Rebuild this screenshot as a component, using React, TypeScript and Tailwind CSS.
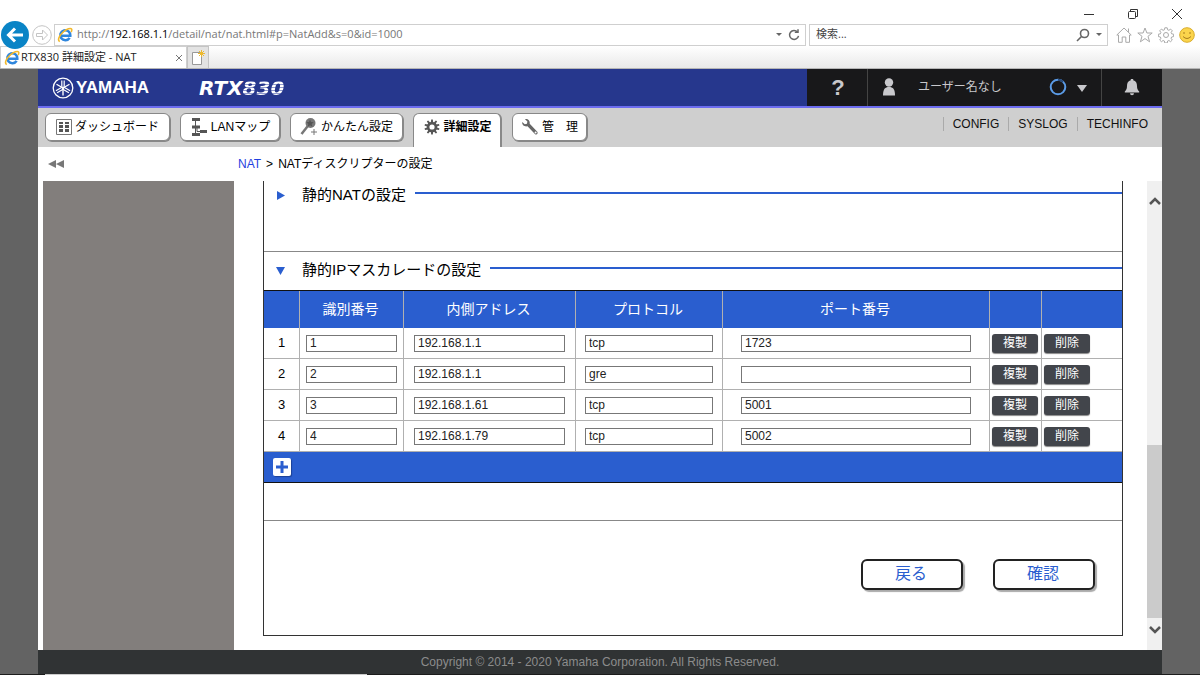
import { useState } from 'react';
import type { ReactNode } from 'react';

type Rule = { id: string; address: string; protocol: string; port: string };

const initialRules: Rule[] = [
  { id: '1', address: '192.168.1.1', protocol: 'tcp', port: '1723' },
  { id: '2', address: '192.168.1.1', protocol: 'gre', port: '' },
  { id: '3', address: '192.168.1.61', protocol: 'tcp', port: '5001' },
  { id: '4', address: '192.168.1.79', protocol: 'tcp', port: '5002' },
];

const uiFont = "font-['Open_Sans','Noto_Sans_CJK_JP',sans-serif]";

function IeLogo() {
  return (
    <svg viewBox="0 0 16 16" className="h-4 w-4 shrink-0" fill="none" aria-hidden="true">
      <path d="M12.6 10.8A5 5 0 1 1 13.300 8.700H4.500" stroke="#2f86dd" strokeWidth="2.600" />
      <path
        d="M2.800 14.600C.2 13.600 2 8.800 6.200 5c3.600-3.200 7.600-4.400 8.400-2.900.4.8.1 1.900-.5 3"
        stroke="#f2b92c"
        strokeWidth="1.6"
      />
    </svg>
  );
}

function TitleBar() {
  return (
    <div className="flex h-[23px] items-center justify-end gap-8 pr-[17px] text-[#333]">
      <button type="button" aria-label="最小化" className="mt-1">
        <svg viewBox="0 0 12 12" className="h-3 w-3" stroke="currentColor">
          <path d="M1 6.5h10" />
        </svg>
      </button>
      <button type="button" aria-label="元に戻す" className="mt-1">
        <svg viewBox="0 0 12 12" className="h-3 w-3" fill="none" stroke="currentColor">
          <rect x="1.5" y="3.5" width="7" height="7" rx="1" />
          <path d="M3.500 3.500v-2h7v7h-2" />
        </svg>
      </button>
      <button type="button" aria-label="閉じる" className="mt-1">
        <svg viewBox="0 0 12 12" className="h-3 w-3" stroke="currentColor">
          <path d="M1 1l10 10M11 1L1 11" />
        </svg>
      </button>
    </div>
  );
}

function AddressBar() {
  return (
    <div className="flex h-[23px] items-center pr-[5px]">
      <button type="button" aria-label="戻る" className="z-10 ml-px">
        <svg viewBox="0 0 28 28" className="h-7 w-7">
          <circle cx="14" cy="14" r="14" fill="#0a84c6" />
          <path d="M22 14H8M14 7.500L7.500 14l6.500 6.500" fill="none" stroke="#fff" strokeWidth="3" />
        </svg>
      </button>
      <button type="button" aria-label="進む" className="ml-[3px]">
        <svg viewBox="0 0 20 20" className="h-5 w-5" fill="#fff" stroke="#c4c4c4">
          <circle cx="10" cy="10" r="9.3" />
          <path d="M4.500 8.500h6V5l5 5-5 5v-3.500h-6z" />
        </svg>
      </button>
      <div className="ml-[2px] flex h-[22px] min-w-0 flex-1 items-center border border-[#cfcfcf] pr-[5px] pl-[2px]">
        <IeLogo />
        <div className={`ml-1 flex-1 truncate text-[11px] text-[#777] ${uiFont}`}>
          http://<span className="text-black">192.168.1.1</span>/detail/nat/nat.html#p=NatAdd&amp;s=0&amp;id=1000
        </div>
        <span className="border-x-[3px] border-t-[3px] border-x-transparent border-t-[#666]" />
        <button type="button" aria-label="更新" className="ml-1.5">
          <svg viewBox="0 0 12 12" className="h-3 w-3" fill="none" stroke="#666" strokeWidth="1.5">
            <path d="M9.500 3A4.500 4.500 0 1 0 10.500 6.800" />
            <path d="M6.800 3.300h3.200V.3" />
          </svg>
        </button>
      </div>
      <div className="ml-[3px] flex h-[22px] w-[299px] items-center border border-[#cfcfcf] pr-[5px] pl-1.5">
        <input
          aria-label="検索"
          placeholder="検索..."
          className={`min-w-0 flex-1 text-[11px] outline-none placeholder:text-[#444] ${uiFont}`}
        />
        <svg viewBox="0 0 14 14" className="h-3.5 w-3.5" fill="none" stroke="#666" strokeWidth="1.6">
          <circle cx="8.5" cy="5.5" r="4" />
          <path d="M5.500 8.500L1 13" />
        </svg>
        <span className="ml-1.5 border-x-[3px] border-t-[3px] border-x-transparent border-t-[#666]" />
      </div>
      <div className="ml-2 flex items-center gap-[5px]">
        <button type="button" aria-label="ホーム">
          <svg viewBox="0 0 16 16" className="h-4 w-4" fill="none" stroke="#a9a9a9">
            <path d="M.8 8L8 1l7.200 7h-1.700v7.300H9.800V10H6.200v5.300H2.500V8zM12.500 5V1.500" />
          </svg>
        </button>
        <button type="button" aria-label="お気に入り">
          <svg viewBox="0 0 16 16" className="h-4 w-4" fill="none" stroke="#a9a9a9">
            <path d="M8 1l1.900 5h5.300L11 9.300l1.600 5.500L8 11.600l-4.600 3.200L5 9.300.8 6h5.300z" />
          </svg>
        </button>
        <button type="button" aria-label="ツール">
          <svg viewBox="0 0 16 16" className="h-4 w-4" fill="none" stroke="#a9a9a9">
            <circle cx="8" cy="8" r="2.5" />
            <path d="M6.800.8h2.400l.4 2 1.300.5 1.700-1.200 1.700 1.700-1.200 1.700.5 1.300 2 .4v2.400l-2 .4-.5 1.300 1.200 1.700-1.700 1.700-1.700-1.200-1.300.5-.4 2H6.800l-.4-2-1.300-.5-1.700 1.200-1.700-1.700 1.200-1.700-.5-1.300-2-.4V7.200l2-.4.5-1.300L1.700 3.800l1.700-1.700 1.700 1.200 1.300-.5z" />
          </svg>
        </button>
        <button type="button" aria-label="フィードバック">
          <svg viewBox="0 0 16 16" className="h-4 w-4">
            <circle cx="8" cy="8" r="7.3" fill="#fbd44c" stroke="#d9ad2b" />
            <path d="M5 5v2M11 5v2M4 9.500q4 4 8 0" fill="none" stroke="#a87d1c" />
          </svg>
        </button>
      </div>
    </div>
  );
}

function BrowserTabs() {
  return (
    <div className="flex h-[23px] border-b border-[#b5b5b5] bg-linear-to-b from-white to-[#e9e9e9]">
      <div className="flex w-[187px] items-center border border-b-0 border-[#cfcfcf] bg-white pr-[3px] pl-[3px]">
        <IeLogo />
        <span className={`ml-px flex-1 truncate text-[11px] text-[#222] ${uiFont}`}>
          RTX830 詳細設定 - NAT
        </span>
        <button type="button" aria-label="タブを閉じる">
          <svg viewBox="0 0 8 8" className="h-2 w-2" stroke="#777">
            <path d="M1 1l6 6M7 1L1 7" />
          </svg>
        </button>
      </div>
      <button
        type="button"
        aria-label="新しいタブ"
        className="flex w-[22px] items-center justify-center border border-b-0 border-[#c4c4c4] bg-[#e3e3e3]"
      >
        <svg viewBox="0 0 14 16" className="h-4 w-3.5">
          <path d="M1.500 2.500h9v12h-9z" fill="#fff" stroke="#999" />
          <path d="M10.500 0v7M7 3.500h7M8 1l5 5M13 1L8 6" stroke="#edb92e" />
        </svg>
      </button>
    </div>
  );
}

const forkAngles = [0, 120, 240];

// three crossed tuning forks inside a ring
function YamahaMark() {
  return (
    <svg viewBox="0 0 22 22" className="h-[22px] w-[22px]" fill="none" stroke="#fff" aria-hidden="true">
      <circle cx="11" cy="11" r="9.8" strokeWidth="1.3" />
      {forkAngles.map((deg) => (
        <g key={deg} transform={`rotate(${deg} 11 11)`}>
          <path d="M11 11v7.500" strokeWidth="1.4" />
          <path d="M9.800 3.500V9q0 2 1.200 2t1.200-2V3.500" strokeWidth="1.2" />
        </g>
      ))}
    </svg>
  );
}

function Header() {
  return (
    <header className="flex h-[39px] border-b-2 border-[#6c6cf0] bg-[#26378d] text-[#c8c8cc]">
      <div className="flex flex-1 items-center pl-[14px] text-white">
        <YamahaMark />
        <span className="ml-0.5 w-[123px] text-[17px] font-bold">YAMAHA</span>
        <span className="pt-px font-['DejaVu_Sans',sans-serif] text-[20px] font-bold italic">
          RTX
          <span className="bg-[repeating-linear-gradient(#fff_0_2px,#8f99cc_2px_3px)] bg-clip-text text-transparent">
            830
          </span>
        </span>
      </div>
      <button
        type="button"
        aria-label="ヘルプ"
        className="w-[60px] bg-[#18181a] pl-0.5 text-[22px] font-bold"
      >
        ?
      </button>
      <button
        type="button"
        className="flex w-[235px] items-center border-x border-[#444] bg-[#18181a] pr-[14px] pb-0.5 pl-[14px] text-[12px]"
      >
        <svg viewBox="0 0 14 18" className="h-[18px] w-3.5" fill="currentColor">
          <circle cx="7" cy="4.5" r="4.2" />
          <path d="M1 17.500C1 11 3 9 7 9s6 2 6 8.500z" />
        </svg>
        <span className="ml-[22px] flex-1 text-left">ユーザー名なし</span>
        <svg viewBox="0 0 18 18" className="h-[18px] w-[18px]" fill="none" strokeWidth="2">
          <circle cx="9" cy="9" r="7.3" stroke="#5b9be6" />
          <path d="M9 1.700a7.300 7.300 0 0 1 5 2" stroke="#294a78" />
        </svg>
        <span className="mt-1 ml-2.5 border-x-[5px] border-t-[7px] border-x-transparent border-t-[#c8c8cc]" />
      </button>
      <button
        type="button"
        aria-label="通知"
        className="flex w-[60px] items-center justify-center bg-[#18181a] pb-0.5"
      >
        <svg viewBox="0 0 16 18" className="h-[18px] w-4" fill="currentColor">
          <path d="M6.800 1h2.400v1.300C12 3 13 5 13 8c0 3 .8 4 2.200 5.500v1H.8v-1C2.200 12 3 11 3 8c0-3 1-5 3.800-5.700z" />
          <path d="M6 15.300h4a2 2 0 0 1-4 0z" />
        </svg>
      </button>
    </header>
  );
}

function DashboardIcon() {
  return (
    <svg viewBox="0 0 16 16" className="h-4 w-4" fill="#555">
      <path d="M.5.5h15v15H.5z" fill="#fff" stroke="#777" />
      <path d="M3 3h4v2H3zM9 3h4v2H9zM3 6h4v3H3zM9 6h4v3H9zM3 10h4v3H3zM9 10h4v3H9z" />
    </svg>
  );
}

function MapIcon() {
  return (
    <svg viewBox="0 0 18 20" className="h-5 w-[18px]" fill="#555">
      <path d="M2 1h8v3H2zM2 8.500h8v3H2zM2 16h8v3H2zM10 13h7v3h-7z" />
      <path d="M5.500 2v16M7 10v4.500h4" fill="none" stroke="#555" />
    </svg>
  );
}

function WandIcon() {
  return (
    <svg viewBox="0 0 18 20" className="h-5 w-[18px]" fill="#777">
      <path d="M1.500 17L9 7.500" stroke="#777" strokeWidth="2.5" />
      <circle cx="10.5" cy="6" r="5" />
      <path d="M10 2.500l1 2.500 2.800.2-2.100 1.800.6 2.700L10 8.200l-2.300 1.500.6-2.700L6.200 5.200 9 5z" fill="#555" />
      <path d="M14 12v6M11 15h6" stroke="#777" />
    </svg>
  );
}

const gearTeeth = [0, 36, 72, 108, 144, 180, 216, 252, 288, 324];

function GearIcon() {
  return (
    <svg viewBox="0 0 16 16" className="h-4 w-4">
      <circle cx="8" cy="8" r="3.9" fill="none" stroke="#555" strokeWidth="2.6" />
      {gearTeeth.map((deg) => (
        <path key={deg} d="M7.200.4h1.600l.4 3.200H6.800z" fill="#555" transform={`rotate(${deg} 8 8)`} />
      ))}
    </svg>
  );
}

function WrenchIcon() {
  return (
    <svg viewBox="0 0 18 18" className="h-[18px] w-[18px]" fill="#666">
      <path d="M4 1.200c2.600-.6 5.200 1.300 4.700 4.500l7.600 8c1.200 1.800-.8 3.600-2.400 2.200L6.500 8.300C3.500 9 .8 7 1.200 4l2.600 2.300L6 5.800l.4-2.200z" />
      <circle cx="14.6" cy="14.5" r="1" fill="#fff" />
    </svg>
  );
}

function NavButton({ icon, label, width }: { icon: ReactNode; label: string; width: string }) {
  return (
    <button
      type="button"
      className={`flex h-7 items-center justify-center gap-[3px] rounded-md border border-[#888] bg-white text-[12px] whitespace-pre text-black shadow-[1px_1px_0_#888] ${width}`}
    >
      {icon}
      {label}
    </button>
  );
}

function MainNav() {
  return (
    <nav className="flex h-[39px] items-start bg-[#cfcfcf] pt-[5px] pr-[5px] pl-[7px]">
      <div className="flex flex-1 gap-2.5">
        <NavButton icon={<DashboardIcon />} label="ダッシュボード" width="w-[125px]" />
        <NavButton icon={<MapIcon />} label="LANマップ" width="w-[100px]" />
        <NavButton icon={<WandIcon />} label="かんたん設定" width="w-[113px]" />
        <button
          type="button"
          aria-current="page"
          className="flex h-[34px] w-[89px] items-center justify-center gap-[3px] rounded-t-md border border-r-2 border-b-0 border-[#888] bg-white pb-2 pl-0.5 text-[12px] font-bold text-black"
        >
          <GearIcon />
          詳細設定
        </button>
        <NavButton icon={<WrenchIcon />} label="管　理" width="w-[75px]" />
      </div>
      <div className="flex text-[12px] leading-[14px] text-[#111]">
        {['CONFIG', 'SYSLOG', 'TECHINFO'].map((name) => (
          <a key={name} href={`#${name}`} className="mt-1 border-l border-[#aaa] px-[9px]">
            {name}
          </a>
        ))}
      </div>
    </nav>
  );
}

function Field({ label, value }: { label: string; value: string }) {
  return (
    <input
      aria-label={label}
      defaultValue={value}
      className="block h-[17px] w-full border border-[#777] px-[3px] text-[12px] leading-[15px] text-[#222]"
    />
  );
}

function RowButton({ children, onClick }: { children: ReactNode; onClick: () => void }) {
  return (
    <button
      type="button"
      onClick={onClick}
      className="block h-[19px] w-[46px] rounded-[3px] bg-[#42454b] text-[12px] leading-[18px] text-white shadow-[0_1px_1px_#888]"
    >
      {children}
    </button>
  );
}

function MasqueradeTable() {
  const [rules, setRules] = useState(initialRules);
  const cell = 'h-[31px] border-r border-b border-[#b0b0b0] p-0 last:border-r-0';

  return (
    <table className="w-full table-fixed border-separate border-spacing-0">
      <colgroup>
        <col className="w-[36px]" />
        <col className="w-[104px]" />
        <col className="w-[172px]" />
        <col className="w-[147px]" />
        <col />
        <col className="w-[52px]" />
        <col className="w-[80px]" />
      </colgroup>
      <thead>
        <tr className="bg-[#2a5ecf] text-[14px] text-white">
          {['', '識別番号', '内側アドレス', 'プロトコル', 'ポート番号', '', ''].map((head, i) => (
            <th key={i} className="h-[37px] border-r border-[#b0b0b0] p-0 pr-0.5 font-normal last:border-r-0">
              {head}
            </th>
          ))}
        </tr>
      </thead>
      <tbody>
        {rules.map((rule, i) => (
          <tr key={i}>
            <td className={`${cell} text-center text-[13px] text-black`}>{i + 1}</td>
            <td className={`${cell} px-1.5`}>
              <Field label="識別番号" value={rule.id} />
            </td>
            <td className={`${cell} px-2.5`}>
              <Field label="内側アドレス" value={rule.address} />
            </td>
            <td className={`${cell} px-[9px]`}>
              <Field label="プロトコル" value={rule.protocol} />
            </td>
            <td className={`${cell} px-[18px]`}>
              <Field label="ポート番号" value={rule.port} />
            </td>
            <td className={`${cell} pl-0.5`}>
              <RowButton onClick={() => setRules([...rules, rule])}>複製</RowButton>
            </td>
            <td className={`${cell} pl-0.5`}>
              <RowButton onClick={() => setRules(rules.filter((_, n) => n !== i))}>削除</RowButton>
            </td>
          </tr>
        ))}
      </tbody>
      <tfoot>
        <tr className="bg-[#2a5ecf]">
          <td colSpan={7} className="h-[31px] border-b border-[#111] p-0 pl-[9px]">
            <button
              type="button"
              aria-label="追加"
              className="block rounded-[2px] bg-white shadow-[1px_1px_1px_#1b4196]"
              onClick={() => setRules([...rules, { id: '', address: '', protocol: 'tcp', port: '' }])}
            >
              <svg viewBox="0 0 18 18" className="h-[18px] w-[18px]" stroke="#2a5ecf" strokeWidth="3">
                <path d="M9 3v12M3 9h12" />
              </svg>
            </button>
          </td>
        </tr>
      </tfoot>
    </table>
  );
}

function SectionTitle({ open, children }: { open?: boolean; children: ReactNode }) {
  return (
    <h2 className="flex items-center text-[15px] leading-[22px] text-black">
      <button type="button" aria-label="開閉" aria-expanded={!!open} className="ml-[11px] w-[27px]">
        <svg viewBox="0 0 10 10" className="h-2.5 w-2.5" fill="#2a5ecf">
          {open ? <path d="M1 2h9L5.500 10z" /> : <path d="M2 1v9l8-4.500z" />}
        </svg>
      </button>
      {children}
      <span className="mb-1 ml-[9px] h-0.5 flex-1 bg-[#2a5ecf]" />
    </h2>
  );
}

function FormButton({ children }: { children: ReactNode }) {
  return (
    <button
      type="button"
      className="h-[31px] w-[102px] rounded-md border-2 border-[#222] bg-white pr-0.5 pb-0.5 text-[16px] leading-[24px] text-[#2a5ecf] shadow-[2px_2px_1px_#aaa]"
    >
      {children}
    </button>
  );
}

function ScrollBar() {
  return (
    <div className="flex w-[15px] flex-col items-center bg-[#f0f0f0]" aria-hidden="true">
      <svg viewBox="0 0 12 8" className="mt-4 h-2 w-3" fill="none" stroke="#555" strokeWidth="2.5">
        <path d="M1 7l5-5 5 5" />
      </svg>
      <div className="mt-auto h-[173px] w-full bg-[#cbcbcb]" />
      <svg viewBox="0 0 12 8" className="mt-2 mb-4 h-2 w-3" fill="none" stroke="#555" strokeWidth="2.5">
        <path d="M1 1l5 5 5-5" />
      </svg>
    </div>
  );
}

export default function App() {
  return (
    <div className="flex min-h-screen flex-col bg-white font-['Liberation_Sans','Noto_Sans_CJK_JP',sans-serif]">
      <TitleBar />
      <AddressBar />
      <BrowserTabs />
      <div className="flex flex-1 flex-col bg-[#636363] px-[38px]">
        <Header />
        <MainNav />
        <div className="flex h-[34px] items-center bg-white text-[12px] text-black">
          <button type="button" aria-label="メニューを隠す" className="w-[200px] pl-2.5">
            <svg viewBox="0 0 16 8" className="h-2 w-4" fill="#777">
              <path d="M8 0v8L0 4zM16 0v8L8 4z" />
            </svg>
          </button>
          <a href="#nat" className="text-[#1f3fe0]">
            NAT
          </a>
          <span className="mx-[5px]">&gt;</span>
          <span>NATディスクリプターの設定</span>
        </div>
        <div className="flex flex-1 bg-white">
          <aside className="ml-[5px] w-[191px] bg-[#827e7c]" />
          <main className="mr-6 mb-[14px] ml-[29px] flex flex-1 flex-col border border-t-0 border-[#333]">
            <section className="h-[71px] border-b border-[#888] pt-[3px]">
              <SectionTitle>静的NATの設定</SectionTitle>
            </section>
            <section className="border-b border-[#888]">
              <div className="h-[39px] border-b border-[#111] pt-[7px]">
                <SectionTitle open>静的IPマスカレードの設定</SectionTitle>
              </div>
              <MasqueradeTable />
              <div className="h-[37px]" />
            </section>
            <div className="flex justify-end gap-[30px] pt-[38px] pr-[27px]">
              <FormButton>戻る</FormButton>
              <FormButton>確認</FormButton>
            </div>
          </main>
          <ScrollBar />
        </div>
        <footer className="h-6 bg-[#303334] text-center text-[12px] leading-6 text-[#8c8c8c]">
          Copyright © 2014 - 2020 Yamaha Corporation. All Rights Reserved.
        </footer>
      </div>
      <div className="h-px bg-[#1c1c1c] pl-[45px]">
        <div className="h-px w-[322px] bg-[#ccc]" />
      </div>
    </div>
  );
}
